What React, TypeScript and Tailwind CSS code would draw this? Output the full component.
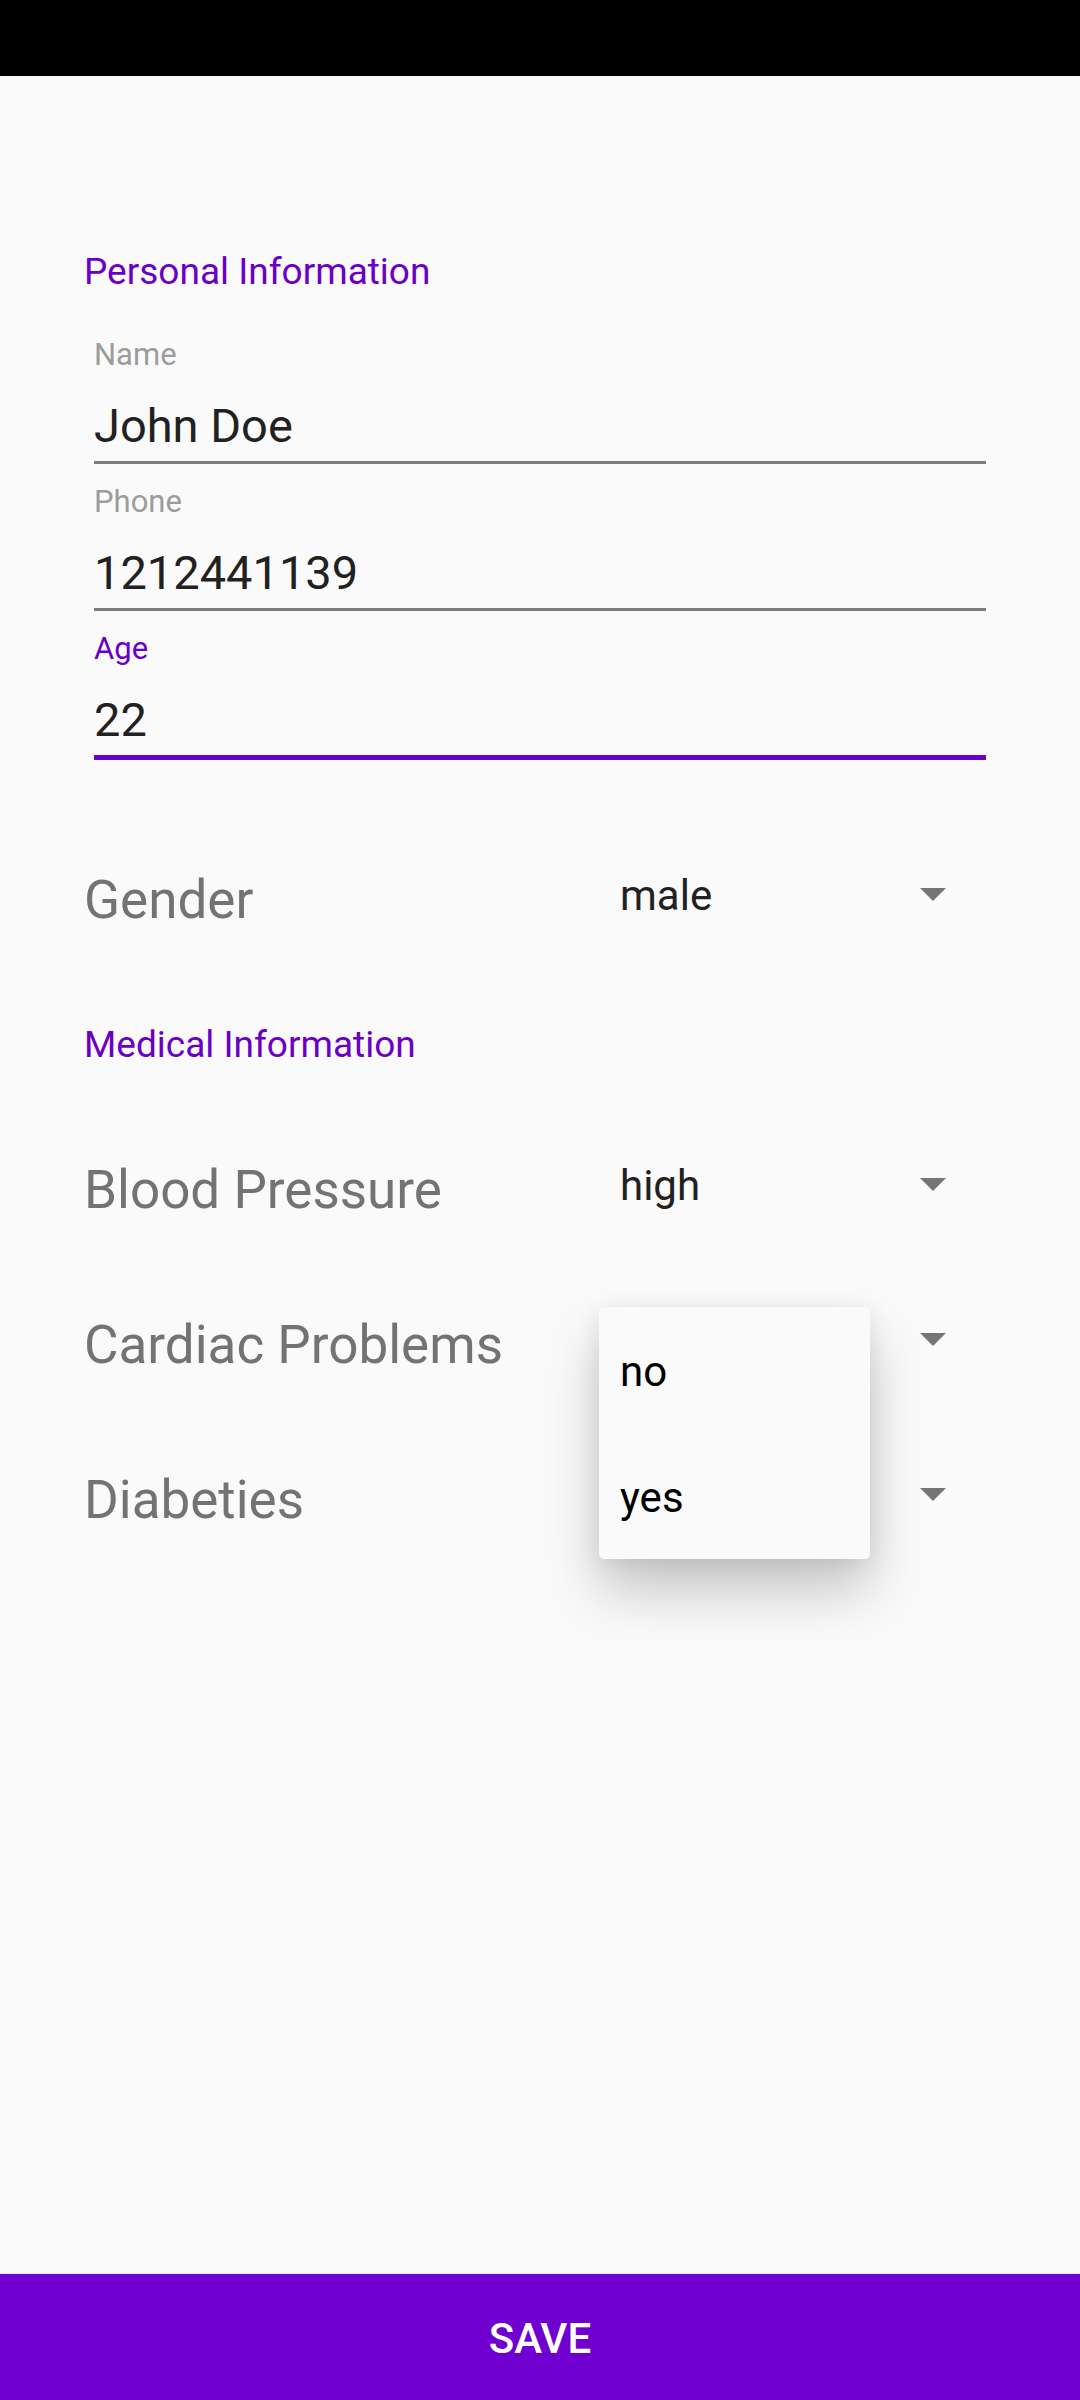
import { useState } from 'react';

type FieldProps = {
  id: string;
  label: string;
  type: string;
  initial: string;
  active: boolean;
  onFocus: () => void;
};

function Field({ id, label, type, initial, active, onFocus }: FieldProps) {
  const [value, setValue] = useState(initial);
  return (
    <div className="flex flex-col">
      <label
        htmlFor={id}
        className={
          active
            ? 'text-[31px] leading-[40px] text-[#6a00c6]'
            : 'text-[31px] leading-[40px] text-[#9c9c9c]'
        }
      >
        {label}
      </label>
      <div
        className={
          active ? 'border-b-[5px] border-[#6c00cb] pt-4' : 'border-b-[3px] border-[#7c7c7c] pt-4'
        }
      >
        <input
          id={id}
          type={type}
          value={value}
          onChange={(e) => setValue(e.target.value)}
          onFocus={onFocus}
          className="block h-[70px] w-full bg-transparent text-[47px] text-[#212121] outline-none"
        />
      </div>
    </div>
  );
}

function Arrow() {
  return (
    <svg
      viewBox="0 0 26 13"
      className="pointer-events-none absolute top-5 right-[19px] h-[13px] w-[26px]"
      fill="#757575"
      aria-hidden="true"
    >
      <path d="M0 0h26L13 13z" />
    </svg>
  );
}

type ChoiceProps = { id: string; label: string; options: string[]; initial: string };

function Choice({ id, label, options, initial }: ChoiceProps) {
  const [value, setValue] = useState(initial);
  return (
    <div className="flex items-start justify-between pr-[31px]">
      <label htmlFor={id} className="text-[53px] leading-[64px] text-[#737373]">
        {label}
      </label>
      <div className="relative w-[366px]">
        <select
          id={id}
          value={value}
          onChange={(e) => setValue(e.target.value)}
          className="block h-14 w-full appearance-none bg-transparent pl-[21px] text-[42px] leading-[56px] text-[#212121] outline-none"
        >
          {options.map((o) => (
            <option key={o}>{o}</option>
          ))}
        </select>
        <Arrow />
      </div>
    </div>
  );
}

function MenuChoice({ id, label, options, initial }: ChoiceProps) {
  const [value, setValue] = useState(initial);
  const [open, setOpen] = useState(true);
  return (
    <div className="flex items-start justify-between pr-[31px]">
      <label htmlFor={id} className="text-[53px] leading-[64px] text-[#737373]">
        {label}
      </label>
      <div className="relative z-10 w-[366px]">
        <button
          id={id}
          type="button"
          aria-haspopup="listbox"
          aria-expanded={open}
          onClick={() => setOpen(!open)}
          className="block h-14 w-full pl-[21px] text-left text-[42px] leading-[56px] text-[#212121]"
        >
          {open ? '' : value}
        </button>
        <Arrow />
        {open && (
          <div
            role="listbox"
            aria-label={label}
            className="absolute -top-1.5 left-0 flex w-[271px] flex-col rounded-[5px] bg-[#fafafa] shadow-[0_32px_56px_rgba(0,0,0,0.21),0_4px_24px_rgba(0,0,0,0.08)]"
          >
            {options.map((o) => (
              <button
                key={o}
                type="button"
                role="option"
                aria-selected={o === value}
                onClick={() => {
                  setValue(o);
                  setOpen(false);
                }}
                className="h-[126px] pt-[3px] pl-[21px] text-left text-[42px] text-black"
              >
                {o}
              </button>
            ))}
          </div>
        )}
      </div>
    </div>
  );
}

export default function App() {
  const [active, setActive] = useState('age');
  const fields = [
    { id: 'name', label: 'Name', type: 'text', initial: 'John Doe' },
    { id: 'phone', label: 'Phone', type: 'tel', initial: '1212441139' },
    { id: 'age', label: 'Age', type: 'text', initial: '22' },
  ];
  return (
    <div className="flex min-h-screen flex-col bg-[#fafafa] font-[Roboto,sans-serif]">
      <header className="h-[76px] bg-black" />
      <form className="flex grow flex-col" onSubmit={(e) => e.preventDefault()}>
        <main className="px-[84px] pt-[171px] pb-20">
          <h2 className="text-[37px] leading-[50px] text-[#6a00c6]">Personal Information</h2>
          <div className="mt-[38px] flex flex-col gap-[18px] px-[10px]">
            {fields.map((f) => (
              <Field key={f.id} {...f} active={active === f.id} onFocus={() => setActive(f.id)} />
            ))}
          </div>
          <div className="mt-[108px]">
            <Choice id="gender" label="Gender" options={['male', 'female']} initial="male" />
          </div>
          <h2 className="mt-[88px] text-[37px] leading-[50px] text-[#6a00c6]">
            Medical Information
          </h2>
          <div className="mt-[88px] flex flex-col gap-[91px]">
            <Choice
              id="pressure"
              label="Blood Pressure"
              options={['high', 'normal', 'low']}
              initial="high"
            />
            <MenuChoice id="cardiac" label="Cardiac Problems" options={['no', 'yes']} initial="no" />
            <Choice id="diabetes" label="Diabeties" options={['no', 'yes']} initial="no" />
          </div>
        </main>
        <button
          type="submit"
          className="mt-auto h-[126px] w-full bg-[#7000d0] pt-[3px] text-[42px] font-medium text-white shadow-[0_0_3px_rgba(0,0,0,0.15)]"
        >
          SAVE
        </button>
      </form>
    </div>
  );
}
